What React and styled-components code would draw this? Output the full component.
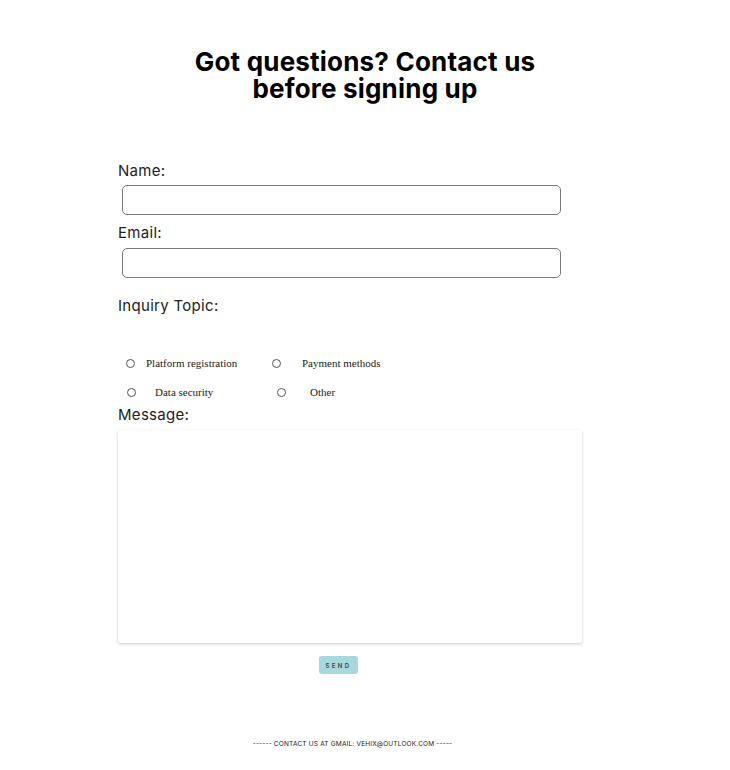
import styled, { createGlobalStyle } from "styled-components";

const Global = createGlobalStyle`
    body {
        margin: 0;
        background: #fff;
        font-family: "Inter", "Liberation Sans", sans-serif;
        color: #222;
    }
`;

const Page = styled.div`
    width: 730px;
    min-height: 770px;
    display: flex;
    flex-direction: column;
`;

const Heading = styled.h1`
    margin: 48px 0 0;
    text-align: center;
    font-size: 26px;
    line-height: 27px;
    font-weight: 700;
    color: #000;
    letter-spacing: 0.2px;
`;

const HeadLine = styled.span`
    display: block;
`;

const Form = styled.form`
    margin: 59px 0 0 118px;
    width: 464px;
    display: flex;
    flex-direction: column;
`;

const Label = styled.label`
    font-size: 15px;
    font-weight: 400;
    line-height: 20px;
    color: #222;
    letter-spacing: 0.3px;
    margin-top: ${p => p.top || 0}px;
`;

const Input = styled.input`
    box-sizing: border-box;
    margin: ${p => p.top || 4}px 0 0 4px;
    width: 439px;
    height: 30px;
    border: 1px solid #7a7a7a;
    border-radius: 5px;
    outline: none;
`;

const Topics = styled.div`
    display: grid;
    grid-template-columns: 146px 150px;
    row-gap: 11px;
    margin-top: 38px;
`;

const Topic = styled.div`
    display: flex;
    align-items: center;
    height: 18px;
    padding-left: ${p => p.shift}px;
`;

const Radio = styled.span`
    width: 7px;
    height: 7px;
    border: 1px solid #555;
    border-radius: 50%;
    flex: none;
`;

const TopicText = styled.span`
    margin-left: ${p => p.gap}px;
    font-family: "Liberation Serif", "DejaVu Serif", serif;
    font-size: 11px;
    color: #222;
`;

const Message = styled.div`
    margin-top: 5px;
    height: 213px;
    background: #fff;
    border-radius: 2px;
    box-shadow: 0 1px 3px rgba(0, 0, 0, 0.22);
`;

const Send = styled.button`
    align-self: flex-start;
    margin: 13px 0 0 201px;
    width: 39px;
    height: 18px;
    padding: 0;
    border: none;
    border-radius: 3px;
    background: #a7d8dc;
    font-family: "Inter", "Liberation Sans", sans-serif;
    font-size: 6px;
    font-weight: 600;
    letter-spacing: 2.4px;
    color: #444;
`;

const Footer = styled.footer`
    margin-top: 66px;
    width: 705px;
    text-align: center;
    font-size: 6.5px;
    letter-spacing: 0.2px;
    color: #222;
`;

const topics = [
    { text: "Platform registration", shift: 8, gap: 11 },
    { text: "Payment methods", shift: 8, gap: 21 },
    { text: "Data security", shift: 9, gap: 19 },
    { text: "Other", shift: 13, gap: 24 },
];

export default function App() {
    return (
        <Page>
            <Global />
            <Heading>
                <HeadLine>Got questions? Contact us</HeadLine>
                <HeadLine>before signing up</HeadLine>
            </Heading>
            <Form onSubmit={e => e.preventDefault()}>
                <Label>Name:</Label>
                <Input type="text" />
                <Label top={8}>Email:</Label>
                <Input type="email" top={5} />
                <Label top={18}>Inquiry Topic:</Label>
                <Topics>
                    {topics.map(t => (
                        <Topic key={t.text} shift={t.shift}>
                            <Radio />
                            <TopicText gap={t.gap}>{t.text}</TopicText>
                        </Topic>
                    ))}
                </Topics>
                <Label top={4}>Message:</Label>
                <Message />
                <Send type="submit">SEND</Send>
            </Form>
            <Footer>------ CONTACT US AT GMAIL: VEHIX@OUTLOOK.COM -----</Footer>
        </Page>
    );
}
